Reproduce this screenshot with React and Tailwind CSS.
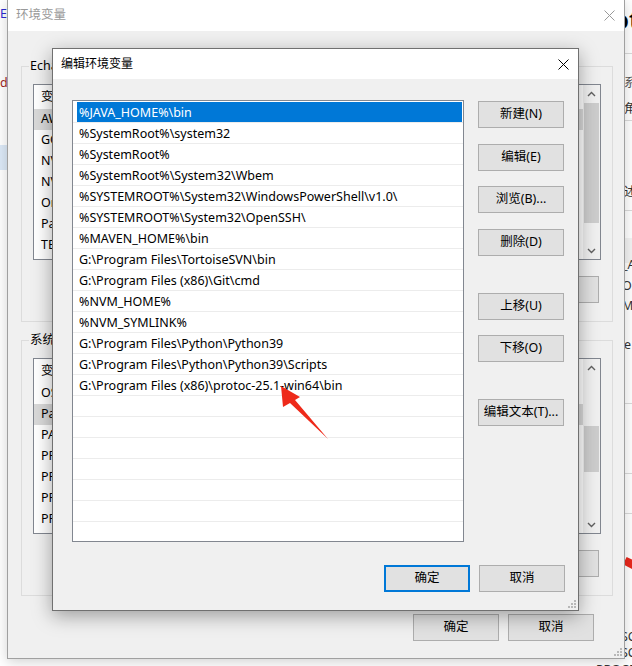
import React from "react";

const pathItems = [
  "%JAVA_HOME%\\bin",
  "%SystemRoot%\\system32",
  "%SystemRoot%",
  "%SystemRoot%\\System32\\Wbem",
  "%SYSTEMROOT%\\System32\\WindowsPowerShell\\v1.0\\",
  "%SYSTEMROOT%\\System32\\OpenSSH\\",
  "%MAVEN_HOME%\\bin",
  "G:\\Program Files\\TortoiseSVN\\bin",
  "G:\\Program Files (x86)\\Git\\cmd",
  "%NVM_HOME%",
  "%NVM_SYMLINK%",
  "G:\\Program Files\\Python\\Python39",
  "G:\\Program Files\\Python\\Python39\\Scripts",
  "G:\\Program Files (x86)\\protoc-25.1-win64\\bin",
];

// only the first letters show beside the edit dialog
const userVars = ["AW", "GO", "NV", "NV", "Or", "Pa", "TE"];
const sysVars = ["OS", "Pa", "PA", "PR", "PR", "PR", "PR"];

const CloseX = ({ color = "#000", size = 11 }) => (
  <svg width={size} height={size} viewBox="0 0 11 11" fill="none">
    <path d="M0.5 0.5L10.5 10.5M10.5 0.5L0.5 10.5" stroke={color} strokeWidth="1" />
  </svg>
);

const Grip = () => (
  <svg width="8" height="8" viewBox="0 0 8 8">
    <rect x="6" y="0" width="2" height="2" fill="#b8b8b8" />
    <rect x="3" y="3" width="2" height="2" fill="#b8b8b8" />
    <rect x="6" y="3" width="2" height="2" fill="#b8b8b8" />
    <rect x="0" y="6" width="2" height="2" fill="#b8b8b8" />
    <rect x="3" y="6" width="2" height="2" fill="#b8b8b8" />
    <rect x="6" y="6" width="2" height="2" fill="#b8b8b8" />
  </svg>
);

const Chevron = ({ down }) => (
  <svg width="9" height="6" viewBox="0 0 9 6" fill="none">
    <path d={down ? "M1 1L4.5 4.5L8 1" : "M1 5L4.5 1.5L8 5"} stroke="#606060" strokeWidth="1.4" />
  </svg>
);

const WinButton = ({ children, primary, className = "" }) => (
  <button
    className={`h-[27px] w-[86px] bg-[#e1e1e1] text-[12.5px] text-black ${
      primary ? "border-2 border-[#0078d7]" : "border border-[#adadad]"
    } ${className}`}
  >
    {children}
  </button>
);

const VarGroup = ({ label, rows, selected, thumbTop, thumbHeight, className = "" }) => (
  <div className={`relative h-[256px] border border-[#dcdcdc] px-[11px] pt-[17px] ${className}`}>
    <span className="absolute left-[7px] top-[-9px] bg-[#f0f0f0] px-[1px] leading-[16px]">{label}</span>
    <div className="flex h-[176px] border border-[#828790] bg-white">
      <div className="flex-1 overflow-hidden">
        <div className="flex h-[24px] items-center pl-[7px]">变量</div>
        {rows.map((r, i) => (
          <div
            key={i}
            className={`flex h-[21px] items-center pl-[7px] ${i === selected ? "bg-[#d9d9d9]" : ""}`}
          >
            {r}
          </div>
        ))}
      </div>
      <div className="flex w-[17px] flex-col items-center bg-[#f0f0f0]">
        <div className="flex h-[17px] items-center justify-center">
          <Chevron />
        </div>
        <div className="relative w-full flex-1">
          <div
            className="absolute left-[1px] right-[1px] bg-[#cdcdcd]"
            style={{ top: thumbTop, height: thumbHeight }}
          />
        </div>
        <div className="flex h-[17px] items-center justify-center">
          <Chevron down />
        </div>
      </div>
    </div>
    <div className="mt-[16px] flex justify-end pr-[2px]">
      <div className="h-[27px] w-[80px] border border-[#adadad] bg-[#e1e1e1]" />
    </div>
  </div>
);

export default function App() {
  const rows = Array.from({ length: 21 }, (_, i) => pathItems[i] || "");

  return (
    <div className="relative h-[666px] w-[632px] overflow-hidden bg-white font-['Noto_Sans','Noto_Sans_CJK_SC',sans-serif] text-[12.5px] text-black">
      {/* desktop behind the dialogs */}
      <span className="absolute left-[0px] top-[5px] text-[#2b2bd0]">ER</span>
      <span className="absolute left-[0px] top-[74px] text-[#a0281e]">d</span>
      <div className="absolute left-0 top-[145px] h-[25px] w-[7px] bg-[#dce9f7]" />
      <span className="absolute left-[613px] top-[3px] text-[26px] font-semibold leading-[32px]">ot</span>
      <div className="absolute left-[624px] top-[53px] h-px w-[8px] bg-[#dadada]" />
      <span className="absolute left-[624px] top-[74px] text-[#555]">系</span>
      <span className="absolute left-[624px] top-[100px] text-[#333]">角</span>
      <div className="absolute left-[624px] top-[120px] h-px w-[8px] bg-[#dadada]" />
      <span className="absolute left-[624px] top-[183px] text-[#333]">述</span>
      <div className="absolute left-[624px] top-[210px] h-px w-[8px] bg-[#dadada]" />
      <div className="absolute left-[624px] top-[238px] h-[25px] w-[8px] bg-[#f3f3f3]" />
      <span className="absolute left-[622px] top-[256px] text-[#333]">_A</span>
      <span className="absolute left-[622px] top-[277px] text-[#333]">ON</span>
      <span className="absolute left-[622px] top-[297px] text-[#333]">M</span>
      <span className="absolute left-[624px] top-[336px] text-[#333]">e</span>
      <div className="absolute left-[624px] top-[403px] h-px w-[8px] bg-[#dadada]" />
      <div className="absolute left-[624px] top-[473px] h-px w-[8px] bg-[#dadada]" />
      <div className="absolute left-[624px] top-[513px] h-px w-[8px] bg-[#dadada]" />
      <div className="absolute left-[623px] top-[557px] h-[12px] w-[9px] bg-[#e8281c] [clip-path:polygon(40%_0,100%_20%,100%_100%,0_60%)]" />
      <span className="absolute left-[621px] top-[630px] leading-[14px] text-[#333]">SC</span>
      <span className="absolute left-[621px] top-[646px] leading-[14px] text-[#333]">SC</span>
      <span className="absolute left-[596px] top-[663px] leading-[14px] text-[#333]">PROCESSO</span>

      {/* 环境变量 */}
      <div className="absolute left-[7px] top-[-1px] flex h-[660px] w-[618px] flex-col border border-[#a0a0a0] bg-[#f0f0f0] shadow-[0_3px_12px_rgba(0,0,0,0.18)]">
        <div className="flex h-[31px] items-center justify-between bg-white pl-[8px] pr-[9px]">
          <span className="text-[#999]">环境变量</span>
          <CloseX color="#999" size={11} />
        </div>
        <div className="flex flex-1 flex-col pl-[13px] pr-[11px] pt-[35px]">
          <VarGroup label="Echa" rows={userVars} selected={0} thumbTop={1} thumbHeight={120} />
          <VarGroup label="系统" rows={sysVars} selected={1} thumbTop={50} thumbHeight={46} className="mt-[18px]" />
          <div className="mt-[18px] flex justify-end gap-[9px] pr-[19px]">
            <WinButton>确定</WinButton>
            <WinButton>取消</WinButton>
          </div>
        </div>
        <div className="absolute bottom-[2px] right-[2px]">
          <Grip />
        </div>
      </div>

      {/* 编辑环境变量 */}
      <div className="absolute left-[52px] top-[48px] flex h-[563px] w-[527px] flex-col border border-[#707070] bg-[#f0f0f0] shadow-[0_5px_18px_rgba(0,0,0,0.35)]">
        <div className="flex h-[30px] items-center justify-between bg-white pl-[8px] pr-[9px]">
          <span className="text-[12px]">编辑环境变量</span>
          <CloseX />
        </div>
        <div className="flex flex-1 flex-col pl-[19px] pr-[13px]">
          <div className="mt-[21px] flex">
            <div className="h-[442px] w-[392px] overflow-hidden border border-[#828790] bg-white pt-[1px]">
              {rows.map((item, i) => (
                <div key={i} className="h-[21px] border-b border-[#ececec] pr-[1px]">
                  <div
                    className={`ml-[4px] flex h-[20px] items-center pl-[2px] pt-[3px] ${
                      i === 0 ? "bg-[#0078d7] text-white" : ""
                    }`}
                  >
                    {item}
                  </div>
                </div>
              ))}
            </div>
            <div className="ml-[14px] mt-[1px] flex flex-col">
              <WinButton>新建(N)</WinButton>
              <WinButton className="mt-[16px]">编辑(E)</WinButton>
              <WinButton className="mt-[15px]">浏览(B)...</WinButton>
              <WinButton className="mt-[16px]">删除(D)</WinButton>
              <WinButton className="mt-[37px]">上移(U)</WinButton>
              <WinButton className="mt-[15px]">下移(O)</WinButton>
              <WinButton className="mt-[37px]">编辑文本(T)...</WinButton>
            </div>
          </div>
          <div className="mt-[23px] flex justify-end gap-[9px]">
            <WinButton primary>确定</WinButton>
            <WinButton>取消</WinButton>
          </div>
        </div>
        <div className="absolute bottom-[2px] right-[2px]">
          <Grip />
        </div>
      </div>

      <svg className="absolute left-0 top-0" width="632" height="666" viewBox="0 0 632 666">
        <polygon points="281,386 300,397 295,400 328,439 290,403 283,407" fill="#ee2a1a" />
      </svg>
    </div>
  );
}
